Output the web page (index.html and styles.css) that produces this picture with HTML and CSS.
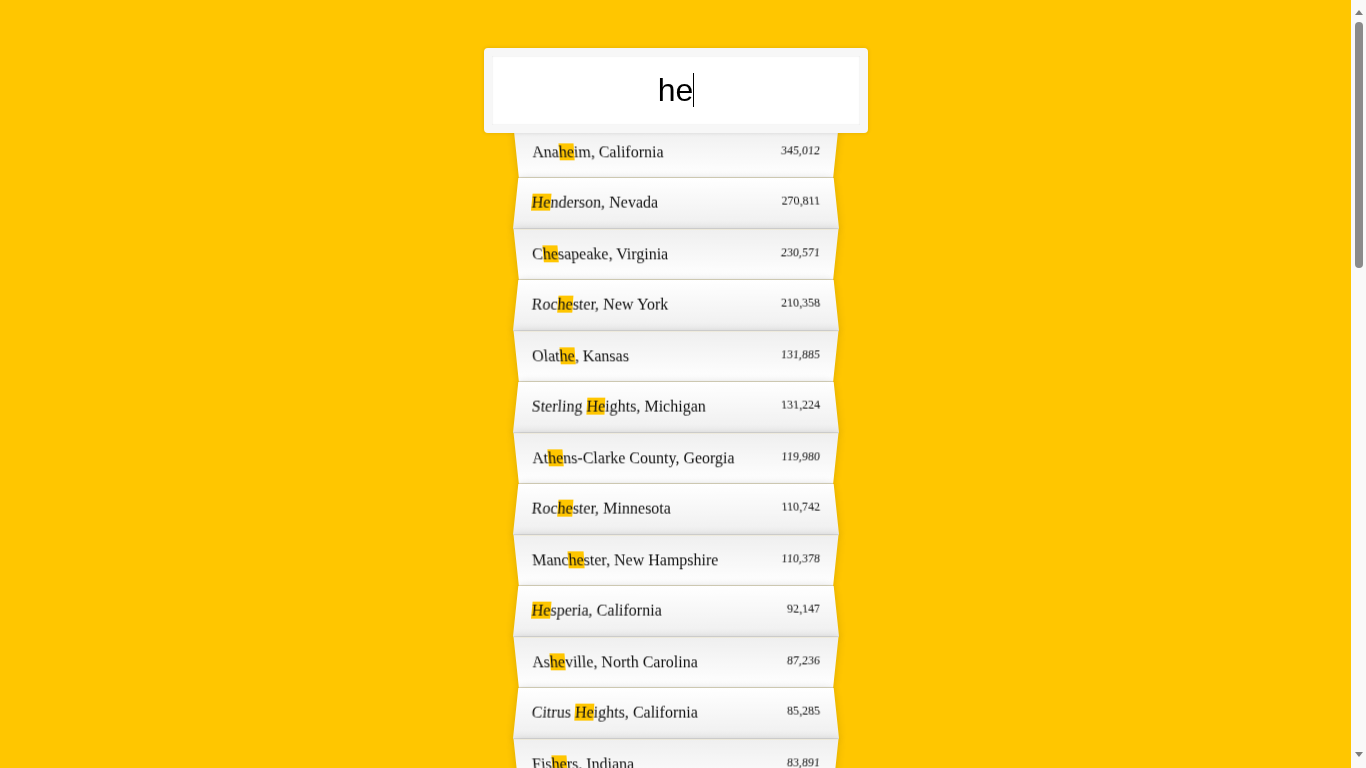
FILE: index.html
```html
<!DOCTYPE html>
<html lang="en">
<head>
<meta charset="utf-8">
<title>Type Ahead</title>
<link rel="stylesheet" href="styles.css">
</head>
<body>
<form class="search-form">
  <div class="search-wrap">
    <input type="text" class="search" placeholder="City or State" value="he" autofocus>
    <span class="caret" aria-hidden="true"></span>
  </div>
  <ul class="suggestions">
    <li><span class="name">Ana<span class="hl">he</span>im, California</span><span class="population">345,012</span></li>
    <li><span class="name"><span class="hl">He</span>nderson, Nevada</span><span class="population">270,811</span></li>
    <li><span class="name">C<span class="hl">he</span>sapeake, Virginia</span><span class="population">230,571</span></li>
    <li><span class="name">Roc<span class="hl">he</span>ster, New York</span><span class="population">210,358</span></li>
    <li><span class="name">Olat<span class="hl">he</span>, Kansas</span><span class="population">131,885</span></li>
    <li><span class="name">Sterling <span class="hl">He</span>ights, Michigan</span><span class="population">131,224</span></li>
    <li><span class="name">At<span class="hl">he</span>ns-Clarke County, Georgia</span><span class="population">119,980</span></li>
    <li><span class="name">Roc<span class="hl">he</span>ster, Minnesota</span><span class="population">110,742</span></li>
    <li><span class="name">Manc<span class="hl">he</span>ster, New Hampshire</span><span class="population">110,378</span></li>
    <li><span class="name"><span class="hl">He</span>speria, California</span><span class="population">92,147</span></li>
    <li><span class="name">As<span class="hl">he</span>ville, North Carolina</span><span class="population">87,236</span></li>
    <li><span class="name">Citrus <span class="hl">He</span>ights, California</span><span class="population">85,285</span></li>
    <li><span class="name">Fis<span class="hl">he</span>rs, Indiana</span><span class="population">83,891</span></li>
    <li><span class="name"><span class="hl">He</span>met, California</span><span class="population">81,750</span></li>
    <li><span class="name">New Roc<span class="hl">he</span>lle, New York</span><span class="population">79,446</span></li>
    <li><span class="name">Arlington <span class="hl">He</span>ights, Illinois</span><span class="population">75,994</span></li>
    <li><span class="name">Roc<span class="hl">he</span>ster Hills, Michigan</span><span class="population">72,952</span></li>
    <li><span class="name">C<span class="hl">he</span>yenne, Wyoming</span><span class="population">62,448</span></li>
    <li><span class="name">Dearborn <span class="hl">He</span>ights, Michigan</span><span class="population">56,620</span></li>
    <li><span class="name"><span class="hl">He</span>ndersonville, Tennessee</span><span class="population">54,068</span></li>
    <li><span class="name"><span class="hl">He</span>mpstead, New York</span><span class="population">53,891</span></li>
    <li><span class="name">W<span class="hl">he</span>aton, Illinois</span><span class="population">53,648</span></li>
    <li><span class="name">Cat<span class="hl">he</span>dral City, California</span><span class="population">52,977</span></li>
    <li><span class="name">S<span class="hl">he</span>boygan, Wisconsin</span><span class="population">48,725</span></li>
    <li><span class="name">C<span class="hl">he</span>sterfield, Missouri</span><span class="population">47,749</span></li>
    <li><span class="name">Cleveland <span class="hl">He</span>ights, Ohio</span><span class="population">45,394</span></li>
    <li><span class="name">Coac<span class="hl">he</span>lla, California</span><span class="population">43,092</span></li>
    <li><span class="name">S<span class="hl">he</span>lton, Connecticut</span><span class="population">41,334</span></li>
    <li><span class="name">T<span class="hl">he</span> Colony, Texas</span><span class="population">39,458</span></li>
    <li><span class="name">S<span class="hl">he</span>rman, Texas</span><span class="population">39,296</span></li>
    <li><span class="name">Huber <span class="hl">He</span>ights, Ohio</span><span class="population">38,142</span></li>
    <li><span class="name">C<span class="hl">he</span>lsea, Massachusetts</span><span class="population">37,670</span></li>
    <li><span class="name">W<span class="hl">he</span>at Ridge, Colorado</span><span class="population">31,324</span></li>
    <li><span class="name">S<span class="hl">he</span>ridan, Wyoming</span><span class="population">30,820</span></li>
    <li><span class="name">Harker <span class="hl">He</span>ights, Texas</span><span class="population">28,426</span></li>
    <li><span class="name">W<span class="hl">he</span>eling, West Virginia</span><span class="population">28,213</span></li>
    <li><span class="name">Winc<span class="hl">he</span>ster, Virginia</span><span class="population">27,284</span></li>
    <li><span class="name"><span class="hl">He</span>rcules, California</span><span class="population">24,060</span></li>
    <li><span class="name">Maple <span class="hl">He</span>ights, Ohio</span><span class="population">23,138</span></li>
    <li><span class="name">S<span class="hl">he</span>lbyville, Tennessee</span><span class="population">20,335</span></li>
    <li><span class="name"><span class="hl">He</span>rmosa Beach, California</span><span class="population">19,750</span></li>
  </ul>
</form>
<div class="scrollbar" aria-hidden="true">
  <span class="arrow arrow-up"></span>
  <span class="thumb"></span>
  <span class="arrow arrow-down"></span>
</div>
</body>
</html>
```

FILE: styles.css
```css
html {
  box-sizing: border-box;
  background: #ffc600;
  font-family: "Liberation Serif", "Times New Roman", serif;
  font-size: 16px;
}

*, *::before, *::after {
  box-sizing: inherit;
}

body {
  margin: 0 15px 0 0;
  padding-top: 1px;
}

.search-form {
  display: flow-root;
  max-width: 320px;
  margin: 39px auto 40px;
}

.search-wrap {
  position: relative;
  z-index: 2;
  width: 384px;
  margin: 8px 0 -8px -32px;
}

.search {
  display: block;
  width: 100%;
  margin: 0;
  padding: 16px;
  text-align: center;
  outline: 0;
  border: 8px solid #f7f7f7;
  border-radius: 4px;
  background: #fff;
  color: #000;
  caret-color: transparent;
  font-family: "Liberation Sans", Arial, sans-serif;
  font-size: 32px;
  box-shadow: 0 0 4px rgba(0, 0, 0, 0.12), inset 0 0 1.6px rgba(0, 0, 0, 0.19);
}

.caret {
  position: absolute;
  top: 25px;
  left: calc(50% + 17px);
  width: 1px;
  height: 34px;
  background: #000;
}

.suggestions {
  margin: 0;
  padding: 0;
  position: relative;
}

.suggestions li {
  background: #fff;
  list-style: none;
  border-bottom: 1px solid #d8d8d8;
  box-shadow: 0 0 8px rgba(0, 0, 0, 0.14);
  margin: 0;
  padding: 16px;
  display: flex;
  justify-content: space-between;
  color: #111;
}

.suggestions li:nth-child(even) {
  transform: perspective(80px) rotateX(3deg) translateY(1.6px) scale(1.001);
  background: linear-gradient(to bottom, #ffffff 0%, #efefef 100%);
}

.suggestions li:nth-child(odd) {
  transform: perspective(80px) rotateX(-3deg) translateY(2.4px);
  background: linear-gradient(to top, #ffffff 0%, #efefef 100%);
}

.population {
  font-size: 12px;
}

.hl {
  background: #ffc600;
}

/* fake browser scrollbar (overlay on the right edge) */
.scrollbar {
  position: fixed;
  top: 0;
  right: 0;
  z-index: 10;
  width: 15px;
  height: 100vh;
  background: #f9f9f9;
  display: flex;
  flex-direction: column;
  align-items: center;
  padding: 10px 0 11px;
}

.arrow {
  display: block;
  width: 0;
  height: 0;
  border-left: 4.5px solid transparent;
  border-right: 4.5px solid transparent;
}

.arrow-up {
  border-bottom: 5px solid #7d7d7d;
}

.arrow-down {
  margin-top: auto;
  border-top: 5px solid #7d7d7d;
}

.thumb {
  display: block;
  width: 8px;
  height: 246px;
  margin-top: 7px;
  border-radius: 4px;
  background: #8b8b8b;
}
```
